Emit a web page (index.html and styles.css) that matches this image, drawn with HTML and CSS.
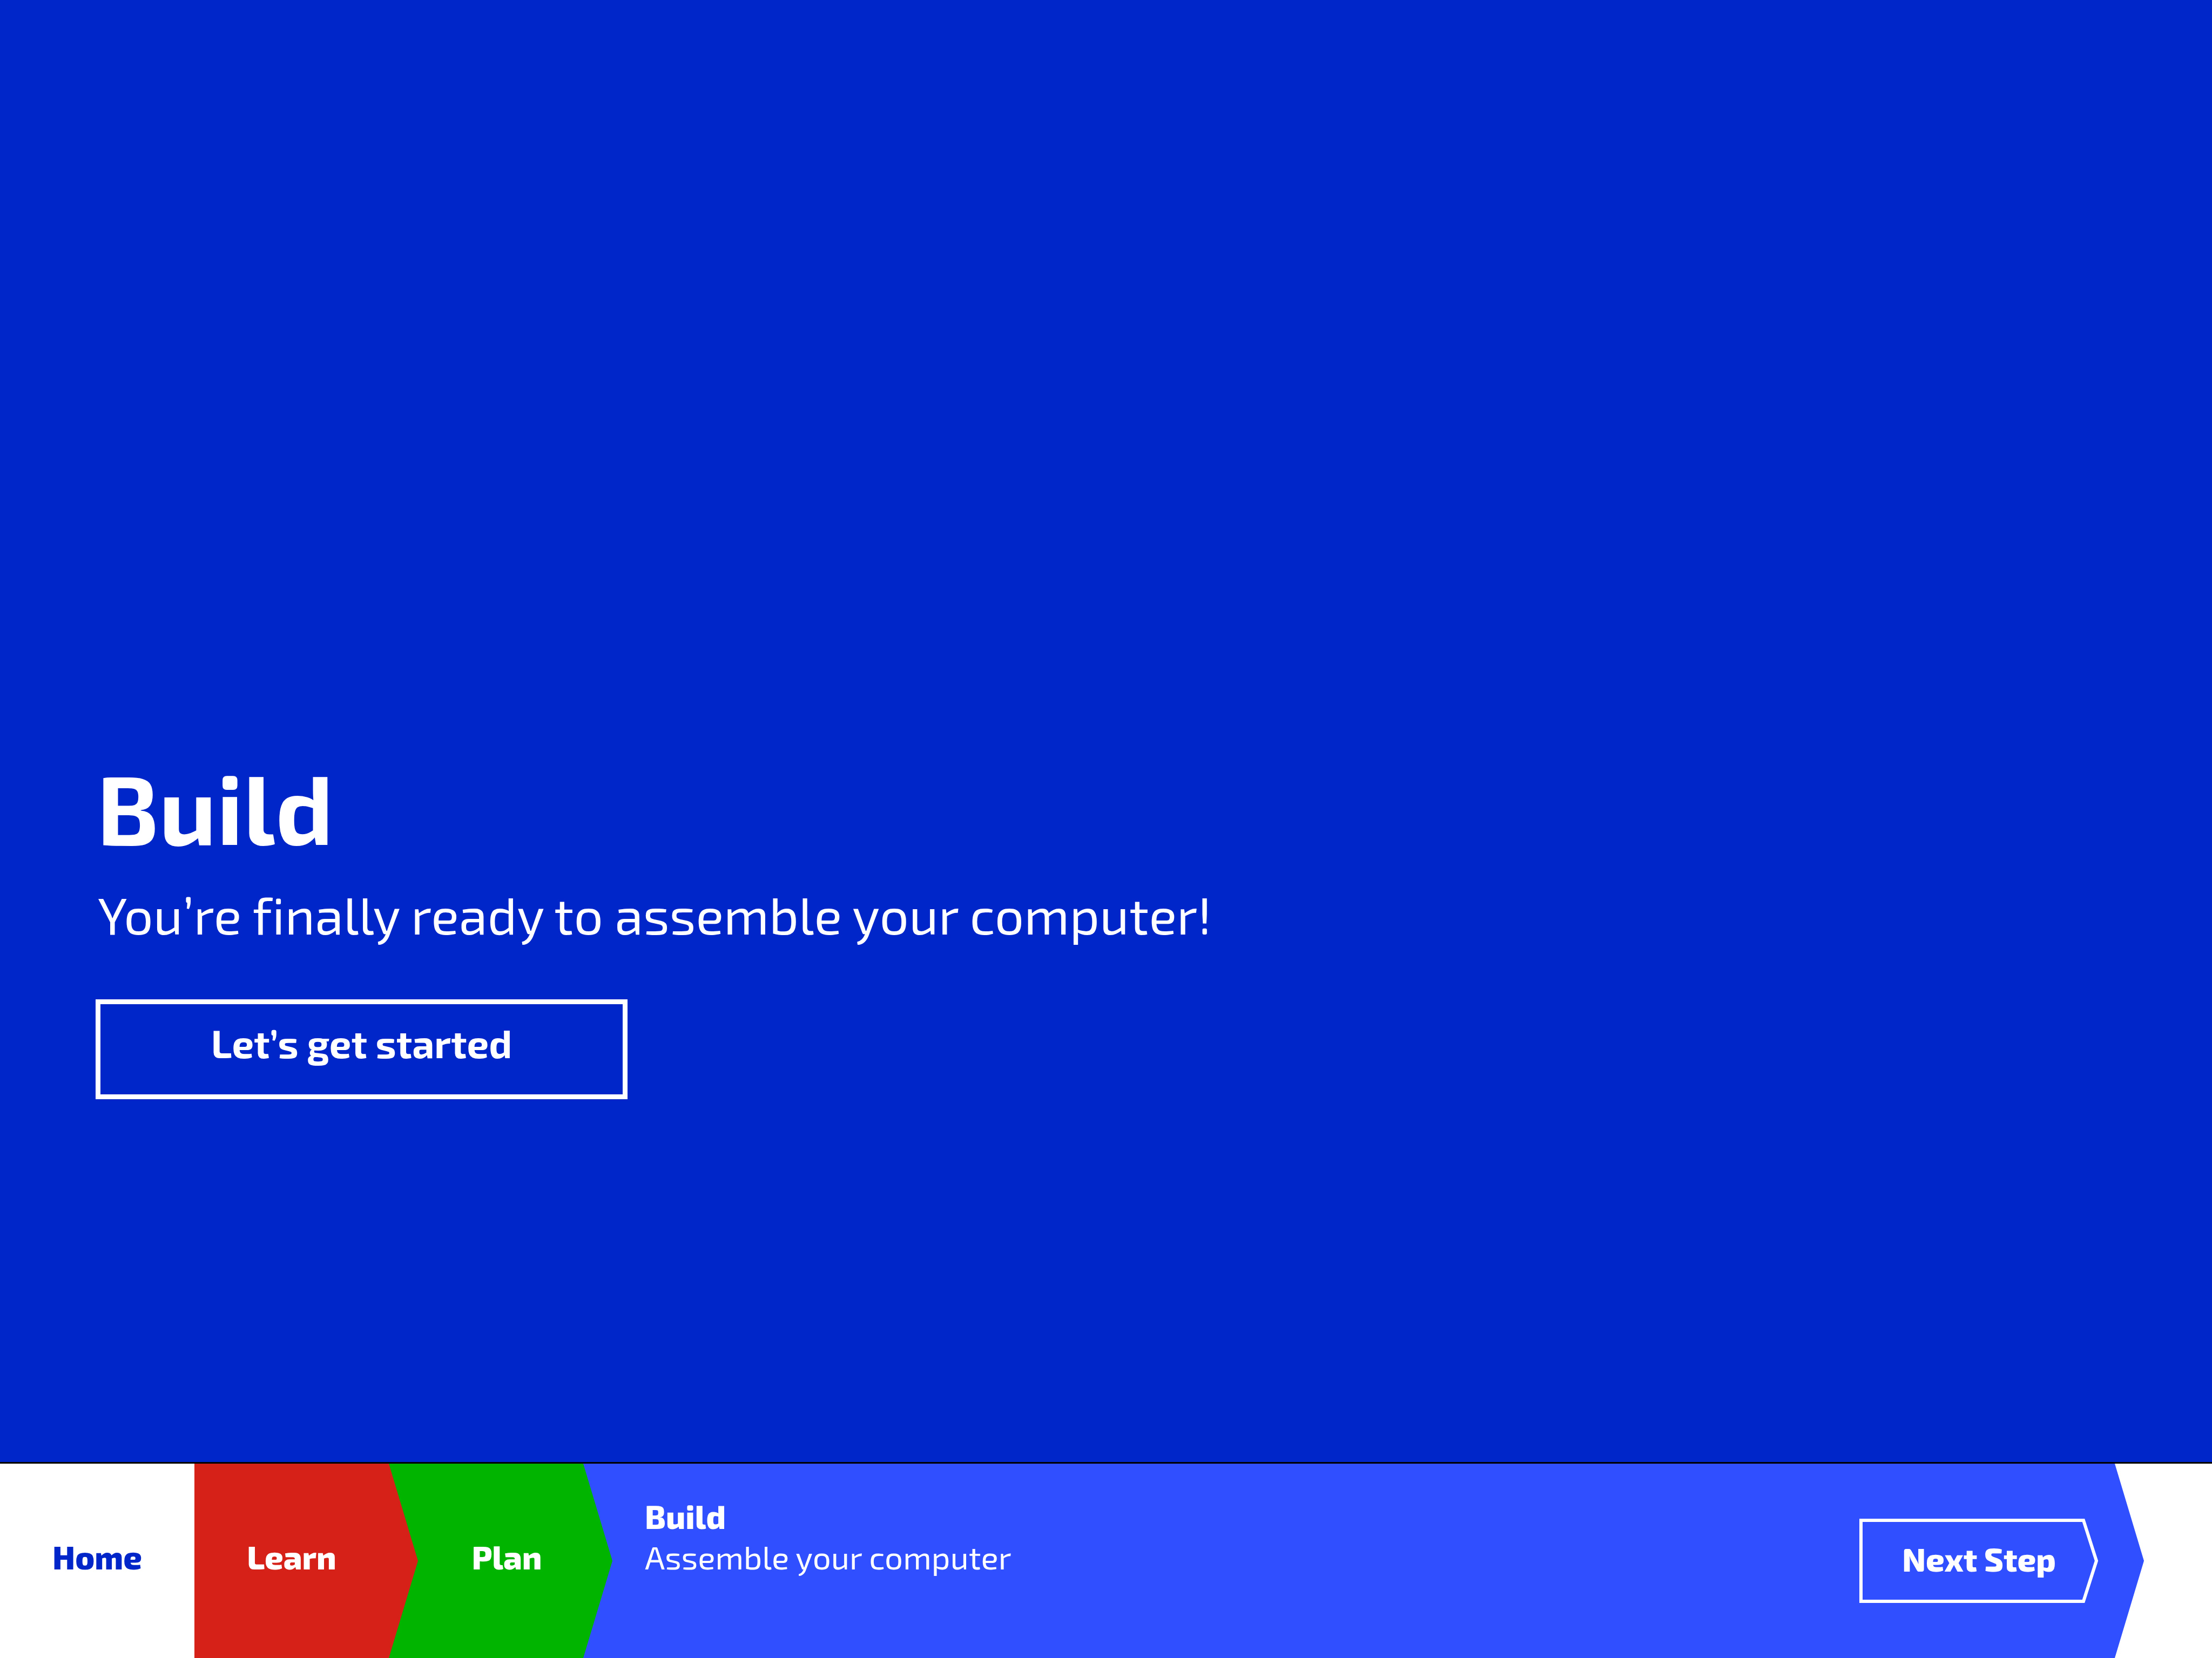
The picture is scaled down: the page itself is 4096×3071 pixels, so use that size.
FILE: index.html
```html
<!DOCTYPE html>
<html lang="en">
<head>
<meta charset="utf-8">
<meta name="viewport" content="width=device-width, initial-scale=1">
<title>Build</title>
<link rel="stylesheet" href="styles.css">
</head>
<body>
<main class="hero">
  <h1 class="hero-title">Build</h1>
  <p class="hero-text">You’re finally ready to assemble your computer!</p>
  <button class="start" type="button">Let’s get started</button>
</main>
<nav class="steps" aria-label="Steps">
  <a class="step home" href="#home">Home</a>
  <a class="step learn" href="#learn">Learn</a>
  <a class="step plan" href="#plan">Plan</a>
  <section class="current">
    <div class="current-info">
      <h2 class="current-title">Build</h2>
      <p class="current-text">Assemble your computer</p>
    </div>
    <button class="next" type="button">
      <svg class="next-outline" viewBox="0 0 443 156" aria-hidden="true"><path d="M3 3H415L439 78L415 153H3Z"/></svg>
      <span class="next-label">Next Step</span>
    </button>
  </section>
</nav>
</body>
</html>
```
FILE: styles.css
```css
* {
  box-sizing: border-box;
  margin: 0;
}

body {
  min-height: 100vh;
  display: flex;
  flex-direction: column;
  background: #0026ca;
  color: #fff;
  font-family: "Exo 2", "Open Sans", sans-serif;
  font-variant-ligatures: none;
}

.hero {
  flex: 1;
  display: flex;
  flex-direction: column;
  align-items: flex-start;
  justify-content: flex-end;
  padding: 0 177px 672px;
}

.hero-title {
  padding-left: 2px;
  font-size: 180px;
  font-weight: 700;
  line-height: 216px;
}

.hero-text {
  padding: 34px 4px 0;
  font-size: 96px;
  font-weight: 400;
  line-height: 116px;
}

.start {
  width: 985px;
  height: 185px;
  margin-top: 100px;
  padding: 0 0 26px;
  border: 9px solid #fff;
  background: none;
  color: inherit;
  font: 700 72px/86px "Exo 2", "Open Sans", sans-serif;
}

.steps {
  display: flex;
  height: 363px;
  border-top: 3px solid #000;
  background: #fff;
  font-size: 60px;
  font-weight: 800;
  line-height: 75px;
}

.step {
  display: flex;
  align-items: center;
  justify-content: center;
  padding-bottom: 16px;
  color: #fff;
  text-decoration: none;
}

.home {
  width: 360px;
  color: #0026ca;
}

/* Each arrow reaches 54px over the step that follows it. */
.learn,
.plan,
.current {
  clip-path: polygon(0 0, calc(100% - 54px) 0, 100% 50%, calc(100% - 54px) 100%, 0 100%);
}

.learn,
.plan {
  position: relative;
  width: 414px;
  margin-right: -54px;
  padding-right: 54px;
}

.learn {
  z-index: 2;
  background: #d52118;
}

.plan {
  z-index: 1;
  padding-left: 77px;
  background: #00b400;
}

.current {
  flex: 1;
  display: flex;
  justify-content: space-between;
  align-items: center;
  margin-right: 126px;
  padding: 0 84px 0 114px;
  background: #304ffe;
}

.current-info {
  align-self: flex-start;
  padding-top: 60px;
}

.current-title {
  font-size: 60px;
  font-weight: 800;
}

.current-text {
  font-weight: 400;
}

.next {
  position: relative;
  width: 443px;
  height: 156px;
  padding: 0 0 8px;
  border: 0;
  background: none;
  color: inherit;
  font: 800 60px/75px "Exo 2", "Open Sans", sans-serif;
}

.next-outline {
  position: absolute;
  inset: 0;
  fill: none;
  stroke: #fff;
  stroke-width: 6;
}
```
